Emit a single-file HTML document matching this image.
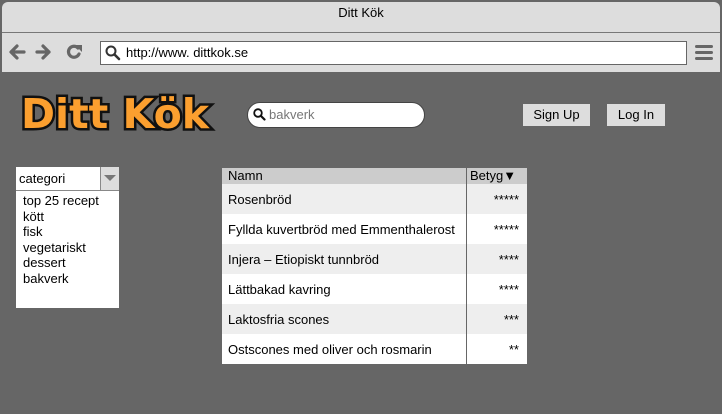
<!DOCTYPE html>
<html><head><meta charset="utf-8"><style>
*{margin:0;padding:0;box-sizing:border-box}
body{width:722px;height:414px;background:#666;font-family:"Liberation Sans",sans-serif;color:#000;position:relative;overflow:hidden}
.a{position:absolute}
</style></head><body>
<div class="a" style="left:2px;top:2px;width:718px;height:70px;background:#ddd;border-radius:6px 6px 0 0"></div>
<div class="a" style="left:2px;top:32px;width:718px;height:1px;background:#777"></div>
<div class="a" style="left:0;top:5px;width:722px;text-align:center;font-size:13px">Ditt Kök</div>
<svg class="a" style="left:8px;top:42px" width="80" height="20" viewBox="0 0 80 20">
<g stroke="#666" stroke-width="3.2" fill="none" stroke-linecap="round" stroke-linejoin="round">
<path d="M16 10H4M9 4L3 10L9 16"/><path d="M29 10H41M35 4L41 10L35 16"/>
<path d="M70 6A5.5 5.5 0 1 0 71 12"/></g>
<path d="M67 3L74 3L74 10Z" fill="#666"/></svg>
<div class="a" style="left:100px;top:41px;width:587px;height:24px;background:#fff;border:1px solid #666"></div>
<svg class="a" style="left:104px;top:44px" width="18" height="18"><circle cx="7" cy="7" r="4.5" stroke="#333" stroke-width="2" fill="none"/><path d="M10.5 10.5L15 15" stroke="#333" stroke-width="2.6" stroke-linecap="round"/></svg>
<div class="a" style="left:126px;top:45px;font-size:13px">http://www. dittkok.se</div>
<div class="a" style="left:695px;top:45px;width:18px;height:3px;background:#666;border-radius:2px"></div>
<div class="a" style="left:695px;top:51px;width:18px;height:3px;background:#666;border-radius:2px"></div>
<div class="a" style="left:695px;top:57px;width:18px;height:3px;background:#666;border-radius:2px"></div>

<div class="a" style="left:21px;top:90px;font-size:41px;font-weight:bold;font-family:'DejaVu Sans',sans-serif;letter-spacing:0px;color:#fb9f2f;-webkit-text-stroke:5px #111;paint-order:stroke fill;white-space:nowrap">Ditt Kök</div>

<div class="a" style="left:247px;top:102px;width:178px;height:26px;background:#fff;border-radius:13px;border:1px solid #444"></div>
<svg class="a" style="left:252px;top:107px" width="14" height="14"><circle cx="6" cy="6" r="3.8" stroke="#111" stroke-width="1.8" fill="none"/><path d="M9 9L12.5 12.5" stroke="#111" stroke-width="2.2" stroke-linecap="round"/></svg>
<div class="a" style="left:269px;top:107px;font-size:13px;color:#777">bakverk</div>
<div class="a" style="left:523px;top:104px;width:67px;height:22px;background:#ddd;font-size:13px;text-align:center;line-height:22px">Sign Up</div>
<div class="a" style="left:607px;top:104px;width:58px;height:22px;background:#ddd;font-size:13px;text-align:center;line-height:22px">Log In</div>

<div class="a" style="left:16px;top:167px;width:103px;height:141px;background:#fff"></div>
<div class="a" style="left:16px;top:190px;width:103px;height:1px;background:#888"></div>
<div class="a" style="left:100px;top:167px;width:19px;height:23px;background:#ddd;border-left:1px solid #888"></div>
<svg class="a" style="left:104px;top:175px" width="12" height="8"><path d="M0 0H12L6 6Z" fill="#777"/></svg>
<div class="a" style="left:19px;top:171px;font-size:13px">categori</div>
<div class="a" style="left:23px;top:193px;font-size:13px;line-height:15.5px">top 25 recept<br>kött<br>fisk<br>vegetariskt<br>dessert<br>bakverk</div>

<div class="a" style="left:222px;top:168px;width:305px;height:196px;background:#fff;font-size:13px">
<div style="height:16px;background:#ccc;position:relative"><span style="position:absolute;left:6px;top:0">Namn</span><span style="position:absolute;left:248px;top:0">Betyg▼</span></div>
<div style="height:30px;background:#eee;position:relative"><span class="a" style="left:6px;top:8px">Rosenbröd</span><span class="a" style="right:8px;top:8px">*****</span></div>
<div style="height:30px;background:#fff;position:relative"><span class="a" style="left:6px;top:8px">Fyllda kuvertbröd med Emmenthalerost</span><span class="a" style="right:8px;top:8px">*****</span></div>
<div style="height:30px;background:#eee;position:relative"><span class="a" style="left:6px;top:8px">Injera – Etiopiskt tunnbröd</span><span class="a" style="right:8px;top:8px">****</span></div>
<div style="height:30px;background:#fff;position:relative"><span class="a" style="left:6px;top:8px">Lättbakad kavring</span><span class="a" style="right:8px;top:8px">****</span></div>
<div style="height:30px;background:#eee;position:relative"><span class="a" style="left:6px;top:8px">Laktosfria scones</span><span class="a" style="right:8px;top:8px">***</span></div>
<div style="height:30px;background:#fff;position:relative"><span class="a" style="left:6px;top:8px">Ostscones med oliver och rosmarin</span><span class="a" style="right:8px;top:8px">**</span></div>
<div class="a" style="left:244px;top:0;width:1px;height:196px;background:#666"></div>
</div>
</body></html>
